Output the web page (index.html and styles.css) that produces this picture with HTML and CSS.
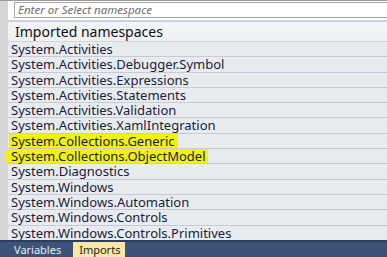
FILE: index.html
```html
<!DOCTYPE html>
<html lang="en">
<head>
  <meta charset="UTF-8" />
  <title>Imports</title>
  <link rel="stylesheet" href="styles.css">
</head>
<body>
  <div class="panel">
    <div class="search-row">
      <div class="search">Enter or Select namespace</div>
    </div>

    <div class="list">
      <div class="list-header">Imported namespaces</div>
      <ul class="rows">
        <li>System.Activities</li>
        <li>System.Activities.Debugger.Symbol</li>
        <li>System.Activities.Expressions</li>
        <li>System.Activities.Statements</li>
        <li>System.Activities.Validation</li>
        <li>System.Activities.XamlIntegration</li>
        <li><span class="mark mark-a">System.Collections.Generic</span></li>
        <li><span class="mark mark-b">System.Collections.ObjectModel</span></li>
        <li>System.Diagnostics</li>
        <li>System.Windows</li>
        <li>System.Windows.Automation</li>
        <li>System.Windows.Controls</li>
        <li>System.Windows.Controls.Primitives</li>
      </ul>
    </div>

    <div class="tabs">
      <span class="tab">Variables</span>
      <span class="tab active">Imports</span>
    </div>
  </div>
</body>
</html>
```

FILE: styles.css
```css
body {
  margin: 0;
  font-family: "Noto Sans", "Open Sans", sans-serif;
  font-size: 13px;
  color: #1a1a2a;
  background: #d6d6d6;
  overflow: hidden;
}

.panel {
  width: 387px;
  height: 257px;
  display: flex;
  flex-direction: column;
  border-top: 1px solid #9a9a9a;
  box-sizing: border-box;
}

.search-row {
  background: #ffffff;
  padding: 1px 0 2px 6px;
  border-bottom: 2px solid #c9d0e2;
  margin-left: 8px;
}

.search {
  height: 14px;
  line-height: 14px;
  border: 1px solid #a9a9a9;
  border-right: none;
  padding-left: 3px;
  font-style: italic;
  color: #6d6d6d;
  font-size: 11.5px;
}

.list {
  flex: 1;
  min-height: 0;
  margin-left: 8px;
  background: #e9ecef;
  display: flex;
  flex-direction: column;
}

.list-header {
  height: 19px;
  line-height: 20px;
  padding-left: 7px;
  font-size: 14px;
  background: linear-gradient(#f4f5f7, #eef0f2);
  border-bottom: 1px solid #d4d6da;
  color: #111;
}

.rows {
  list-style: none;
  margin: 0;
  padding: 0;
}

.rows li {
  height: 14.3px;
  line-height: 14.3px;
  border-bottom: 1px solid #c8cadb;
  padding-left: 3px;
  white-space: nowrap;
  color: #1a2140;
}

.mark {
  display: inline-block;
  background: #f2f20a;
  padding: 0 3px 0 2px;
  margin-left: -2px;
}

.mark-b {
  margin-left: -6px;
  padding-left: 6px;
}

.tabs {
  flex: none;
  height: 15px;
  background: #3d5277;
  border-top: 2px solid #2c3d5e;
  display: flex;
  align-items: stretch;
  padding-left: 14px;
  gap: 12px;
  font-size: 11px;
}

.tab {
  color: #e8ecf5;
  line-height: 15px;
}

.tab.active {
  background: #fbe8a8;
  color: #222;
  padding: 0 5px 0 6px;
}
```
